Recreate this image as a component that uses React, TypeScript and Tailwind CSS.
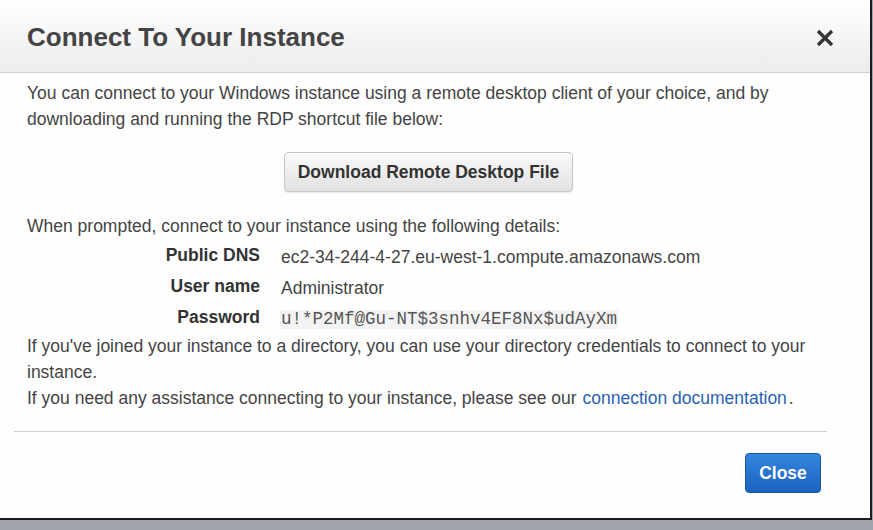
import React from "react";

export default function App() {
  return (
    <div className="w-[873px] h-[530px] bg-[#a0a6ab] overflow-hidden" style={{ fontFamily: '"Liberation Sans", Arial, sans-serif' }}>
      <div className="w-[872px] h-[520px] bg-[#fefefe] border-r-2 border-b-2 border-[#1c1c1c] flex flex-col">
        <div className="h-[73px] shrink-0 flex items-center justify-between pl-[27px] pr-[36px] border-b border-[#d2d2d2] bg-gradient-to-b from-[#ffffff] to-[#ececec]">
          <h1 className="text-[26px] font-bold text-[#444] mt-[2px]">Connect To Your Instance</h1>
          <svg width="18" height="18" viewBox="0 0 18 18" className="mt-[4px]">
            <path d="M2 2 L16 16 M16 2 L2 16" stroke="#333" strokeWidth="3.2" strokeLinecap="butt" />
          </svg>
        </div>
        <div className="pl-[27px] pr-[40px] pt-[7px] text-[17.5px] leading-[26px] text-[#444]">
          <p>You can connect to your Windows instance using a remote desktop client of your choice, and by downloading and running the RDP shortcut file below:</p>
          <div className="flex justify-center mt-[20px]">
            <button className="h-[40px] w-[289px] rounded-[4px] border border-[#c6c6c6] bg-gradient-to-b from-[#fafafa] to-[#e1e1e1] text-[17.5px] font-bold text-[#333] shadow-[0_1px_1px_rgba(0,0,0,0.08)]">
              Download Remote Desktop File
            </button>
          </div>
          <p className="mt-[21px]">When prompted, connect to your instance using the following details:</p>
          <div className="grid grid-cols-[233px_1fr] gap-x-[21px] mt-[3px]">
            <div className="h-[31px] text-right font-bold text-[#333] leading-[31px] -mt-[2px]">Public DNS</div>
            <div className="h-[31px] leading-[31px]">ec2-34-244-4-27.eu-west-1.compute.amazonaws.com</div>
            <div className="h-[31px] text-right font-bold text-[#333] leading-[31px] -mt-[2px]">User name</div>
            <div className="h-[31px] leading-[31px]">Administrator</div>
            <div className="h-[31px] text-right font-bold text-[#333] leading-[31px] -mt-[2px]">Password</div>
            <div className="h-[31px] flex items-center">
              <span className="bg-[#f3f3f3] text-[#555] px-[1px] h-[19px] leading-[19px] text-[17.5px] -ml-[1px]" style={{ fontFamily: '"Liberation Mono", "Courier New", monospace' }}>
                u!*P2Mf@Gu-NT$3snhv4EF8Nx$udAyXm
              </span>
            </div>
          </div>
          <p className="-mt-[2px]">If you've joined your instance to a directory, you can use your directory credentials to connect to your instance.</p>
          <p>
            If you need any assistance connecting to your instance, please see our{" "}
            <a className="text-[#2a62b3] ml-[1px] mr-[2px]">connection documentation</a>.
          </p>
        </div>
        <div className="ml-[14px] mr-[43px] mt-[20px] border-t border-[#d0d0d0]"></div>
        <div className="flex justify-end mr-[49px] mt-[21px]">
          <button className="h-[40px] w-[76px] rounded-[4px] border border-[#1a57a8] bg-gradient-to-b from-[#3485de] to-[#1a62bf] text-white text-[17.5px] font-bold">
            Close
          </button>
        </div>
      </div>
    </div>
  );
}
